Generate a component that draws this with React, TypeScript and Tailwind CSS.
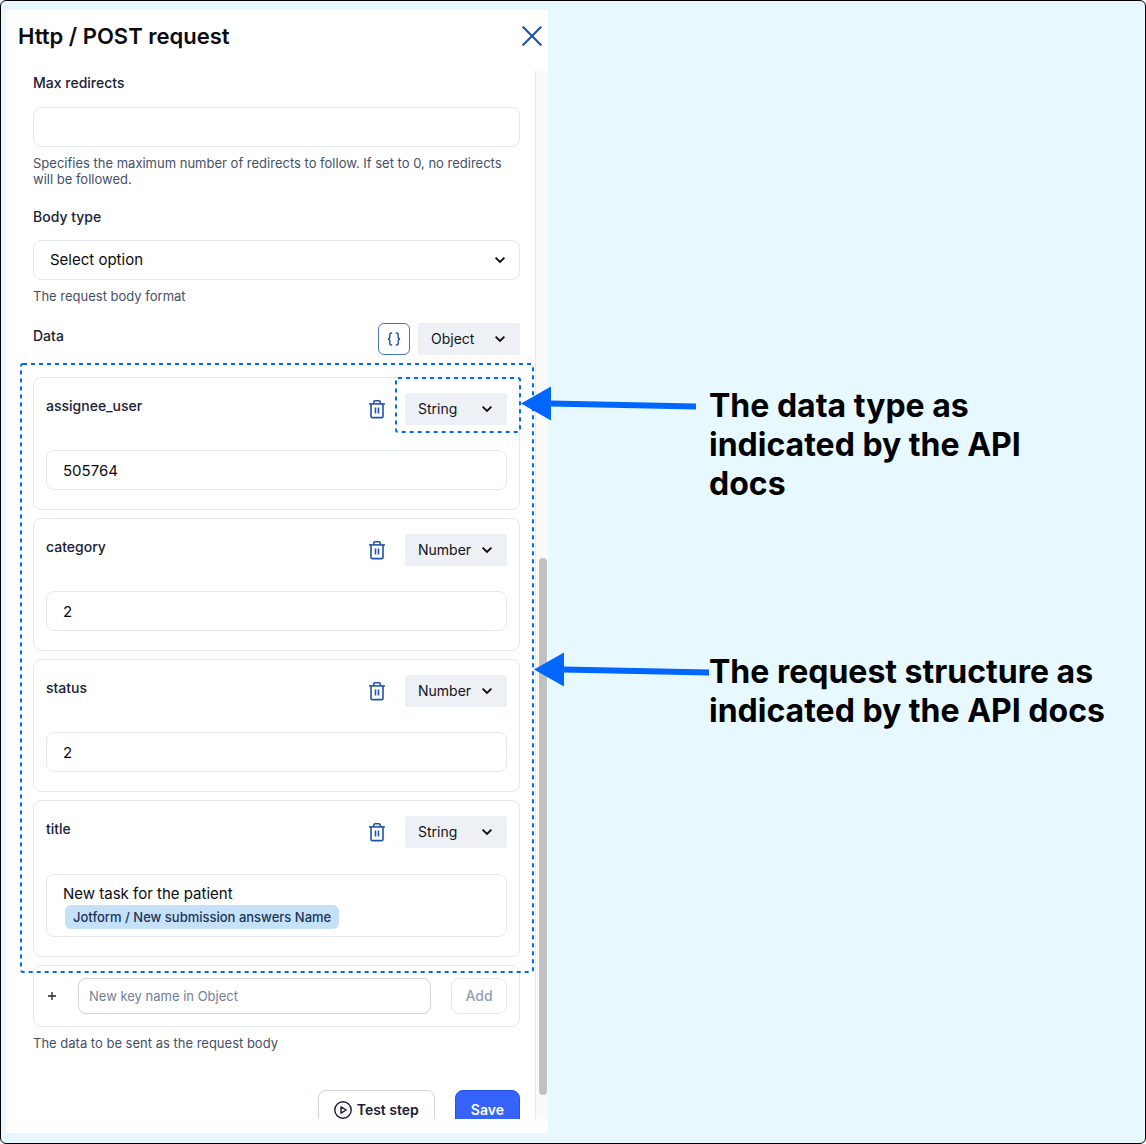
import { useState } from 'react'

type FieldType = 'String' | 'Number' | 'Object' | 'Boolean'

interface DataField {
  key: string
  type: FieldType
  value: string
  chip?: string
  highlighted?: boolean
}

const FIELD_TYPES: FieldType[] = ['String', 'Number', 'Object', 'Boolean']

const initialFields: DataField[] = [
  { key: 'assignee_user', type: 'String', value: '505764', highlighted: true },
  { key: 'category', type: 'Number', value: '2' },
  { key: 'status', type: 'Number', value: '2' },
  {
    key: 'title',
    type: 'String',
    value: 'New task for the patient',
    chip: 'Jotform / New submission answers Name'
  }
]

function CloseIcon() {
  return (
    <svg width="20" height="20" viewBox="0 0 20 20" fill="none" stroke="#1f54a6" strokeWidth="2.2" strokeLinecap="round">
      <path d="M1.3 1.3 18.7 18.7M18.7 1.3 1.3 18.7" />
    </svg>
  )
}

function ChevronIcon({ className }: { className: string }) {
  return (
    <svg
      className={`pointer-events-none absolute ${className}`}
      width="12"
      height="8"
      viewBox="0 0 12 8"
      fill="none"
      stroke="#0b0b0f"
      strokeWidth="1.8"
    >
      <path d="M1.6 1.6 6 6 10.4 1.6" />
    </svg>
  )
}

function TrashIcon() {
  return (
    <svg width="18" height="20" viewBox="0 0 18 20" fill="none" stroke="#1f54a6" strokeWidth="1.6">
      <path d="M1.1 4.9h15.8" />
      <path d="M5.7 4.7V3.3a1.5 1.5 0 0 1 1.5-1.5h3.6a1.5 1.5 0 0 1 1.5 1.5v1.4" />
      <path d="M3 5v11.9a1.7 1.7 0 0 0 1.7 1.7h8.6a1.7 1.7 0 0 0 1.7-1.7V5" />
      <path d="M7.5 8.6v6M10.5 8.6v6" />
    </svg>
  )
}

function BracesIcon() {
  return (
    <svg width="14" height="14" viewBox="0 0 14 14" fill="none" stroke="#1f54a6" strokeWidth="1.4">
      <path d="M5.2 1H4.6A1.8 1.8 0 0 0 2.8 2.8v1.9c0 1.2-.7 2.3-1.9 2.3 1.2 0 1.9 1.1 1.9 2.3v1.9A1.8 1.8 0 0 0 4.6 13h.6" />
      <path d="M8.8 1h.6a1.8 1.8 0 0 1 1.8 1.8v1.9c0 1.2.7 2.3 1.9 2.3-1.2 0-1.9 1.1-1.9 2.3v1.9A1.8 1.8 0 0 1 9.4 13h-.6" />
    </svg>
  )
}

function PlayIcon() {
  return (
    <svg width="18" height="18" viewBox="0 0 18 18" fill="none" stroke="#1a2036" strokeWidth="1.4" strokeLinejoin="round">
      <circle cx="9" cy="9" r="8.2" />
      <path d="M7 5.8v6.4L12.2 9z" />
    </svg>
  )
}

// Dashed frame drawn around its positioned parent
function DashedFrame({ className }: { className: string }) {
  return (
    <svg className={`pointer-events-none absolute overflow-visible ${className}`}>
      <rect width="100%" height="100%" rx="2" fill="none" stroke="#0066ff" strokeWidth="2" strokeDasharray="4 4" />
    </svg>
  )
}

function Arrow({ className }: { className: string }) {
  return (
    <svg className={`absolute ${className}`} width="175" height="36" viewBox="0 0 175 36" fill="#0066ff">
      <path d="M0 17.5 30 0.5v34z" />
      <path d="M29 14.6 175 17.5v6L29 20.4z" />
    </svg>
  )
}

function TypeSelect({ label, value, onChange }: { label: string; value: FieldType; onChange: (v: FieldType) => void }) {
  return (
    <div className="relative">
      <select
        aria-label={label}
        value={value}
        onChange={(e) => onChange(e.target.value as FieldType)}
        className="block h-8 w-[102px] appearance-none rounded-xs bg-[#edf0f5] pl-[13px] text-sm text-[#12131a]"
      >
        {FIELD_TYPES.map((t) => (
          <option key={t}>{t}</option>
        ))}
      </select>
      <ChevronIcon className="top-3 right-[14px]" />
    </div>
  )
}

function FieldCard({ field, onChange, onRemove }: { field: DataField; onChange: (f: DataField) => void; onRemove: () => void }) {
  const id = `field-${field.key}`
  return (
    <div className="rounded-lg border border-[#e2e8f0] px-3 pt-[15px] pb-[19px]">
      <div className="flex items-start">
        <label htmlFor={id} id={`${id}-label`} className="mt-[5px] flex-1 text-sm leading-4 font-medium text-[#1a2036]">
          {field.key}
        </label>
        <button type="button" aria-label={`Remove ${field.key}`} onClick={onRemove} className="mt-[6px] mr-[19px]">
          <TrashIcon />
        </button>
        <div className="relative">
          <TypeSelect label={`${field.key} type`} value={field.type} onChange={(type) => onChange({ ...field, type })} />
          {field.highlighted && <DashedFrame className="-top-[15px] -left-[9px] h-[54px] w-[124px]" />}
        </div>
      </div>
      {field.chip ? (
        <div
          id={id}
          role="textbox"
          aria-labelledby={`${id}-label`}
          contentEditable
          suppressContentEditableWarning
          className="mt-[26px] rounded-lg border border-[#e2e8f0] px-4 pt-2 pb-[7px] text-[15px] leading-[22px] text-[#0b0b0f]"
        >
          <div>{field.value}</div>
          <span className="ml-[2px] block w-fit rounded-md bg-[#c5e1f7] px-2 text-[13px] leading-[24px] font-medium text-[#1c335c]">
            {field.chip}
          </span>
        </div>
      ) : (
        <input
          id={id}
          value={field.value}
          onChange={(e) => onChange({ ...field, value: e.target.value })}
          className="mt-[25px] block h-10 w-full rounded-lg border border-[#e2e8f0] px-4 text-[15px] text-[#0b0b0f]"
        />
      )}
    </div>
  )
}

export default function App() {
  const [fields, setFields] = useState<DataField[]>(initialFields)
  const [maxRedirects, setMaxRedirects] = useState('')
  const [bodyType, setBodyType] = useState('')
  const [dataType, setDataType] = useState<FieldType>('Object')
  const [newKey, setNewKey] = useState('')

  const updateField = (next: DataField) => {
    setFields(fields.map((f) => (f.key === next.key ? next : f)))
  }

  const addField = () => {
    setFields([...fields, { key: newKey, type: 'String', value: '' }])
    setNewKey('')
  }

  return (
    <div className="bg-white font-[Inter,sans-serif]">
      <div className="flex h-screen overflow-hidden rounded-md border border-black bg-[#e8f8ff] pt-[9px] pb-[10px] pl-[5px]">
        <section className="flex w-full max-w-[542px] flex-col bg-white pb-[14px]">
          <header className="flex h-[61px] shrink-0 items-start justify-between pt-[11px] pr-[6px] pl-3">
            <h1 className="text-[22px] leading-[30px] font-semibold text-[#0b0b0f]">Http / POST request</h1>
            <button type="button" aria-label="Close" className="mt-[5px]">
              <CloseIcon />
            </button>
          </header>

          <div className="flex min-h-0 flex-1">
            <form className="min-w-0 flex-1 overflow-hidden pt-1 pr-[15px] pl-[27px]" onSubmit={(e) => e.preventDefault()}>
              <label htmlFor="max-redirects" className="block text-sm leading-4 font-medium text-[#1a2036]">
                Max redirects
              </label>
              <input
                id="max-redirects"
                value={maxRedirects}
                onChange={(e) => setMaxRedirects(e.target.value)}
                className="mt-4 block h-10 w-full rounded-lg border border-[#e2e8f0] px-4 text-[15px]"
              />
              <p className="mt-2 text-[13px] leading-4 text-[#454f66]">
                Specifies the maximum number of redirects to follow. If set to 0, no redirects will be followed.
              </p>

              <label htmlFor="body-type" className="mt-[22px] block text-sm leading-4 font-medium text-[#1a2036]">
                Body type
              </label>
              <div className="relative mt-[15px]">
                <select
                  id="body-type"
                  value={bodyType}
                  onChange={(e) => setBodyType(e.target.value)}
                  className="block h-10 w-full appearance-none rounded-lg border border-[#e2e8f0] px-4 text-[15px] text-[#0b0b0f]"
                >
                  <option value="">Select option</option>
                  <option value="json">JSON</option>
                  <option value="form">Form data</option>
                  <option value="raw">Raw</option>
                </select>
                <ChevronIcon className="top-4 right-[14px]" />
              </div>
              <p className="mt-2 text-[13px] leading-4 text-[#454f66]">The request body format</p>

              <div className="mt-[19px] flex items-start">
                <h2 className="mt-[5px] flex-1 text-sm leading-4 font-medium text-[#1a2036]">Data</h2>
                <button
                  type="button"
                  aria-label="Edit as JSON"
                  className="mr-2 flex size-8 items-center justify-center rounded-md border border-[#4a74b8]"
                >
                  <BracesIcon />
                </button>
                <TypeSelect label="Data type" value={dataType} onChange={setDataType} />
              </div>

              <div className="relative mt-[22px] flex flex-col gap-2">
                {fields.map((field) => (
                  <FieldCard
                    key={field.key}
                    field={field}
                    onChange={updateField}
                    onRemove={() => setFields(fields.filter((f) => f.key !== field.key))}
                  />
                ))}
                <DashedFrame className="-top-[13px] -left-3 h-[calc(100%+28px)] w-[calc(100%+25px)]" />
              </div>

              <div className="mt-2 flex items-center rounded-lg border border-[#e2e8f0] px-3 py-3">
                <svg width="12" height="12" viewBox="0 0 12 12" fill="none" stroke="#1a2036" strokeWidth="1.3">
                  <path d="M6 2v8M2 6h8" />
                </svg>
                <input
                  aria-label="New key name"
                  placeholder="New key name in Object"
                  value={newKey}
                  onChange={(e) => setNewKey(e.target.value)}
                  className="ml-5 h-9 min-w-0 flex-1 rounded-lg border border-[#cbd5e0] px-[10px] text-[13px] placeholder:text-[#718096]"
                />
                <button
                  type="button"
                  disabled={!newKey}
                  onClick={addField}
                  className="ml-5 h-9 w-14 rounded-lg border border-[#cbd5e0] text-sm font-medium text-[#475569] disabled:border-[#e2e8f0] disabled:text-[#94a0b5]"
                >
                  Add
                </button>
              </div>
              <p className="mt-2 text-[13px] leading-4 text-[#454f66]">The data to be sent as the request body</p>

              <div className="mt-[39px] flex justify-end gap-5">
                <button
                  type="button"
                  className="flex h-10 items-center gap-[5px] rounded-lg border border-[#cbd5e0] px-[15px] text-sm font-semibold text-[#1a2036]"
                >
                  <PlayIcon />
                  Test step
                </button>
                <button type="submit" className="h-10 rounded-lg border border-[#2450f0] bg-[#3563fb] px-[15px] text-sm font-semibold text-white">
                  Save
                </button>
              </div>
            </form>

            <div className="w-[13px] shrink-0 border-l border-[#e8e8e8] bg-[#fafafa]">
              <div className="mt-[487px] ml-[3px] h-[537px] w-2 rounded-full bg-[#c1c1c1]" />
            </div>
          </div>
        </section>

        <aside className="relative flex-1 pt-[376px] pr-6 pl-[161px] text-[32px] leading-[39px] font-bold text-black">
          <p className="relative max-w-[340px]">
            <Arrow className="top-0 right-[calc(100%+13px)]" />
            The data type as indicated by the API docs
          </p>
          <p className="relative mt-[149px] max-w-[412px]">
            <Arrow className="top-0 right-full" />
            The request structure as indicated by the API docs
          </p>
        </aside>
      </div>
    </div>
  )
}
